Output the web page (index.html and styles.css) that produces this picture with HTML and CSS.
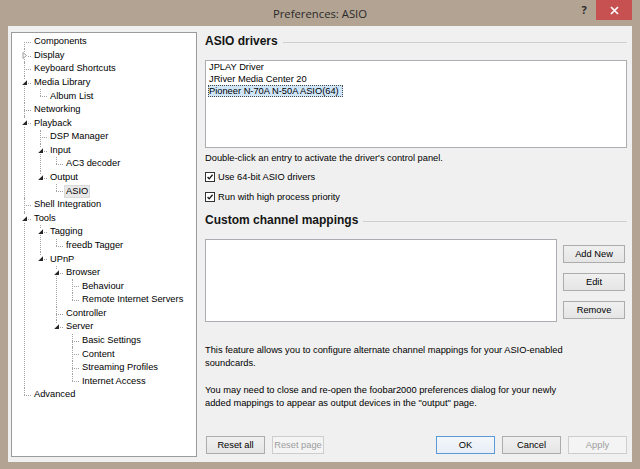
FILE: index.html
```html
<!DOCTYPE html>
<html>
<head>
<meta charset="utf-8">
<link rel="stylesheet" href="styles.css">
</head>
<body>
<div class="window">
  <div class="titlebar">
    <div class="title">Preferences: ASIO</div>
    <div class="controls">
      <div class="help">?</div>
      <div class="close"><svg width="9" height="9" viewBox="0 0 9 9"><path d="M1 1 L8 8 M8 1 L1 8" stroke="#fff" stroke-width="1.7" fill="none"/></svg></div>
    </div>
  </div>
  <div class="client">
    <div class="tree">
      <ul>
        <li><div class="row"><span class="lbl">Components</span></div></li>
        <li><div class="row"><span class="exp"><svg width="7" height="7" viewBox="0 0 7 7"><path d="M2 0.5 L5.5 3.5 L2 6.5 Z" fill="#fff" stroke="#9a9a9a" stroke-width="1"/></svg></span><span class="lbl">Display</span></div></li>
        <li><div class="row"><span class="lbl">Keyboard Shortcuts</span></div></li>
        <li><div class="row"><span class="exp"><svg width="7" height="7" viewBox="0 0 7 7"><path d="M6 1.2 L6 6 L1.2 6 Z" fill="#262626"/></svg></span><span class="lbl">Media Library</span></div>
          <ul>
            <li><div class="row"><span class="lbl">Album List</span></div></li>
          </ul>
        </li>
        <li><div class="row"><span class="lbl">Networking</span></div></li>
        <li><div class="row"><span class="exp"><svg width="7" height="7" viewBox="0 0 7 7"><path d="M6 1.2 L6 6 L1.2 6 Z" fill="#262626"/></svg></span><span class="lbl">Playback</span></div>
          <ul>
            <li><div class="row"><span class="lbl">DSP Manager</span></div></li>
            <li><div class="row"><span class="exp"><svg width="7" height="7" viewBox="0 0 7 7"><path d="M6 1.2 L6 6 L1.2 6 Z" fill="#262626"/></svg></span><span class="lbl">Input</span></div>
              <ul>
                <li><div class="row"><span class="lbl">AC3 decoder</span></div></li>
              </ul>
            </li>
            <li><div class="row"><span class="exp"><svg width="7" height="7" viewBox="0 0 7 7"><path d="M6 1.2 L6 6 L1.2 6 Z" fill="#262626"/></svg></span><span class="lbl">Output</span></div>
              <ul>
                <li><div class="row"><span class="lbl sel">ASIO</span></div></li>
              </ul>
            </li>
          </ul>
        </li>
        <li><div class="row"><span class="lbl">Shell Integration</span></div></li>
        <li><div class="row"><span class="exp"><svg width="7" height="7" viewBox="0 0 7 7"><path d="M6 1.2 L6 6 L1.2 6 Z" fill="#262626"/></svg></span><span class="lbl">Tools</span></div>
          <ul>
            <li><div class="row"><span class="exp"><svg width="7" height="7" viewBox="0 0 7 7"><path d="M6 1.2 L6 6 L1.2 6 Z" fill="#262626"/></svg></span><span class="lbl">Tagging</span></div>
              <ul>
                <li><div class="row"><span class="lbl">freedb Tagger</span></div></li>
              </ul>
            </li>
            <li><div class="row"><span class="exp"><svg width="7" height="7" viewBox="0 0 7 7"><path d="M6 1.2 L6 6 L1.2 6 Z" fill="#262626"/></svg></span><span class="lbl">UPnP</span></div>
              <ul>
                <li><div class="row"><span class="exp"><svg width="7" height="7" viewBox="0 0 7 7"><path d="M6 1.2 L6 6 L1.2 6 Z" fill="#262626"/></svg></span><span class="lbl">Browser</span></div>
                  <ul>
                    <li><div class="row"><span class="lbl">Behaviour</span></div></li>
                    <li><div class="row"><span class="lbl">Remote Internet Servers</span></div></li>
                  </ul>
                </li>
                <li><div class="row"><span class="lbl">Controller</span></div></li>
                <li><div class="row"><span class="exp"><svg width="7" height="7" viewBox="0 0 7 7"><path d="M6 1.2 L6 6 L1.2 6 Z" fill="#262626"/></svg></span><span class="lbl">Server</span></div>
                  <ul>
                    <li><div class="row"><span class="lbl">Basic Settings</span></div></li>
                    <li><div class="row"><span class="lbl">Content</span></div></li>
                    <li><div class="row"><span class="lbl">Streaming Profiles</span></div></li>
                    <li><div class="row"><span class="lbl">Internet Access</span></div></li>
                  </ul>
                </li>
              </ul>
            </li>
          </ul>
        </li>
        <li><div class="row"><span class="lbl">Advanced</span></div></li>
      </ul>
    </div>
    <div class="pane">
      <div class="head head-first">ASIO drivers</div>
      <div class="list drivers">
        <div class="item">JPLAY Driver</div>
        <div class="item">JRiver Media Center 20</div>
        <div class="item"><span class="item-sel">Pioneer N-70A N-50A ASIO(64)</span></div>
      </div>
      <p class="hint">Double-click an entry to activate the driver's control panel.</p>
      <div class="check check-first"><span class="box"><svg width="10" height="10" viewBox="0 0 10 10"><path d="M2 5 L4 7.3 L8.2 2.2" stroke="#111" stroke-width="1.6" fill="none"/></svg></span><span>Use 64-bit ASIO drivers</span></div>
      <div class="check"><span class="box"><svg width="10" height="10" viewBox="0 0 10 10"><path d="M2 5 L4 7.3 L8.2 2.2" stroke="#111" stroke-width="1.6" fill="none"/></svg></span><span>Run with high process priority</span></div>
      <div class="head head-second">Custom channel mappings</div>
      <div class="maprow">
        <div class="list mappings"></div>
        <div class="side-buttons">
          <button class="btn side">Add New</button>
          <button class="btn side">Edit</button>
          <button class="btn side">Remove</button>
        </div>
      </div>
      <p class="info first">This feature allows you to configure alternate channel mappings for your ASIO-enabled<br>soundcards.</p>
      <p class="info second">You may need to close and re-open the foobar2000 preferences dialog for your newly<br>added mappings to appear as output devices in the "output" page.</p>
      <div class="footer">
        <button class="btn reset-all">Reset all</button>
        <button class="btn reset-page disabled">Reset page</button>
        <span class="spacer"></span>
        <button class="btn main default">OK</button>
        <button class="btn main">Cancel</button>
        <button class="btn main disabled">Apply</button>
      </div>
    </div>
  </div>
</div>
</body>
</html>
```

FILE: styles.css
```css
* { box-sizing: border-box; }
html, body { margin: 0; padding: 0; }
body {
  width: 640px;
  height: 469px;
  overflow: hidden;
  font-family: "Liberation Sans", Arial, sans-serif;
  font-size: 9.3px;
  color: #000;
  background: #b2a393;
}
.window {
  width: 640px;
  height: 469px;
  background: #b2a393;
  display: flex;
  flex-direction: column;
  padding: 0 8px 7px;
}
.titlebar {
  height: 26px;
  flex: none;
  display: grid;
  grid-template-columns: 1fr auto 1fr;
  align-items: start;
}
.title {
  grid-column: 2;
  font-family: "Open Sans", "Noto Sans", sans-serif;
  font-size: 11.3px;
  line-height: 27px;
  color: #2a2a2a;
  white-space: nowrap;
}
.controls {
  grid-column: 3;
  justify-self: end;
  display: flex;
  align-items: flex-start;
}
.help {
  width: 16px;
  margin-right: 4px;
  height: 20px;
  line-height: 20px;
  text-align: center;
  font-family: "Open Sans", sans-serif;
  font-weight: bold;
  font-size: 11px;
  color: #2a2a2a;
}
.close {
  width: 36px;
  height: 20px;
  background: #c75050;
  display: flex;
  align-items: center;
  justify-content: center;
}
.close svg { display: block; }

.client {
  flex: 1;
  background: #f0f0f0;
  display: flex;
  padding: 6px 5px 5px 3px;
  min-height: 0;
}

/* Tree */
.tree {
  width: 186px;
  flex: none;
  background: #fff;
  border: 1px solid #9c9c9c;
  overflow: hidden;
}
.tree ul { list-style: none; margin: 0; padding: 0; }
.tree > ul { padding-left: 6px; padding-top: 2px; }
.tree li { position: relative; padding-left: 16px; }
.tree li::before {
  content: "";
  position: absolute;
  left: 6px;
  top: 0;
  bottom: 0;
  border-left: 1px dotted #a3a3a3;
}
.tree li:last-child::before { bottom: auto; height: 7px; }
.tree > ul > li:first-child::before { top: 7px; }
.tree li::after {
  content: "";
  position: absolute;
  left: 6px;
  top: 7px;
  width: 9px;
  border-top: 1px dotted #a3a3a3;
}
.row {
  height: 13.58px;
  display: flex;
  align-items: center;
  white-space: nowrap;
}
.lbl {
  display: inline-block;
  line-height: 11px;
  padding: 0 1px;
  margin-left: -2px;
  border: 1px solid transparent;
  position: relative;
  z-index: 1;
  background: #fff;
}
.lbl.sel { background: #e8e8e8; border-color: #dadada; }
.exp {
  position: absolute;
  left: 3px;
  top: 3px;
  width: 7px;
  height: 7px;
  background: #fff;
  z-index: 2;
}
.exp svg { display: block; }

/* Right pane */
.pane {
  flex: 1;
  margin-left: 8px;
  display: flex;
  flex-direction: column;
  min-width: 0;
}
.head {
  height: 18px;
  display: flex;
  align-items: center;
  font-family: "Liberation Sans", Arial, sans-serif;
  font-weight: bold;
  font-size: 12px;
  color: #151515;
  white-space: nowrap;
}
.head::after {
  content: "";
  flex: 1;
  margin-left: 5px;
  margin-top: 3px;
  border-top: 1px solid #cfcfcf;
}
.head-second { margin-top: 7px; }
.list {
  background: #fff;
  border: 1px solid #abadb3;
}
.drivers {
  margin-top: 10px;
  height: 88px;
  padding: 0 1px;
}
.item {
  height: 12px;
  line-height: 12px;
  padding-left: 2px;
  white-space: nowrap;
}
.item-sel {
  display: inline-block;
  height: 12px;
  line-height: 10px;
  margin-left: -1px;
  padding-right: 3px;
  background: #cfe5f8;
  border: 1px dotted #4a4a4a;
}
.hint {
  margin: 4px 0 0;
  line-height: 12px;
  white-space: nowrap;
}
.check {
  display: flex;
  align-items: center;
  height: 14px;
  margin-top: 6px;
  gap: 3px;
}
.box {
  width: 10px;
  height: 10px;
  background: #fff;
  border: 1px solid #333;
  display: flex;
  align-items: center;
  justify-content: center;
}
.box svg { display: block; width: 8px; height: 8px; }
.maprow {
  display: flex;
  margin-top: 10px;
  height: 83px;
  gap: 6px;
}
.mappings { flex: 1; }
.side-buttons {
  width: 62px;
  margin-right: 2px;
  padding-top: 6px;
  display: flex;
  flex-direction: column;
  gap: 10px;
}
.btn {
  height: 18px;
  padding: 0;
  margin: 0;
  border: 1px solid #acacac;
  background: linear-gradient(#f0f0f0, #e5e5e5);
  font-family: "Liberation Sans", Arial, sans-serif;
  font-size: 9.3px;
  color: #000;
  border-radius: 0;
}
.btn.side { width: 62px; }
.btn.default { border-color: #5b9ad6; background: linear-gradient(#f3f7fb, #e8eef5); }
.btn.disabled { border-color: #cdcdcd; background: #f4f4f4; color: #9d9d9d; }
.info {
  margin: 0;
  line-height: 13px;
  white-space: nowrap;
}
.info.first { margin-top: 22px; }
.info.second { margin-top: 14px; }
.footer {
  margin-top: auto;
  padding-bottom: 3px;
  display: flex;
  gap: 7px;
}
.spacer { flex: 1; }
.reset-all { width: 59px; margin-left: 1px; }
.reset-page { width: 52px; }
.btn.main { width: 59px; }
```
